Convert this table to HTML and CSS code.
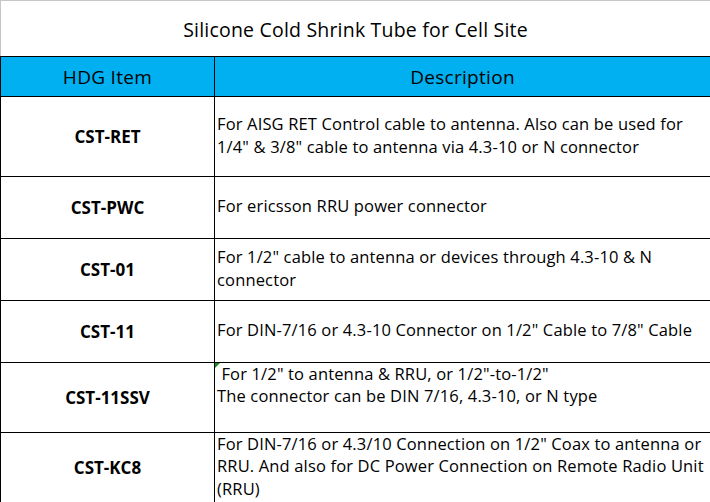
FILE: index.html
```html
<!DOCTYPE html>
<html>
<head>
<meta charset="utf-8">
<link rel="stylesheet" href="styles.css">
</head>
<body>
<div class="sheet">
  <div class="title">Silicone Cold Shrink Tube for Cell Site</div>
  <div class="grid">
    <div class="cell head">HDG Item</div>
    <div class="cell head">Description</div>

    <div class="cell item">CST-RET</div>
    <div class="cell desc">For AISG RET Control cable to antenna. Also can be used for<br>1/4" &amp; 3/8" cable to antenna via 4.3-10 or N connector</div>

    <div class="cell item">CST-PWC</div>
    <div class="cell desc">For ericsson RRU power connector</div>

    <div class="cell item">CST-01</div>
    <div class="cell desc">For 1/2" cable to antenna or devices through 4.3-10 &amp; N<br>connector</div>

    <div class="cell item">CST-11</div>
    <div class="cell desc">For DIN-7/16 or 4.3-10 Connector on 1/2" Cable to 7/8" Cable</div>

    <div class="cell item">CST-11SSV</div>
    <div class="cell desc note">&nbsp;For 1/2" to antenna &amp; RRU, or 1/2"-to-1/2"<br>The connector can be DIN 7/16, 4.3-10, or N type<br>&nbsp;</div>

    <div class="cell item">CST-KC8</div>
    <div class="cell desc">For DIN-7/16 or 4.3/10 Connection on 1/2" Coax to antenna or<br>RRU. And also for DC Power Connection on Remote Radio Unit<br>(RRU)</div>
  </div>
</div>
</body>
</html>
```

FILE: styles.css
```css
html, body {
  margin: 0;
  padding: 0;
  background: #ffffff;
  overflow: hidden;
}

.sheet {
  width: 710px;
  font-family: "Open Sans", "Noto Sans", sans-serif;
  color: #000000;
}

.title {
  box-sizing: border-box;
  height: 56px;
  border-top: 1px solid #c6c6c6;
  border-left: 1px solid #c6c6c6;
  display: flex;
  align-items: center;
  justify-content: center;
  font-size: 19.5px;
  letter-spacing: 0.2px;
  padding-top: 1px;
}

.grid {
  display: grid;
  grid-template-columns: 214px 496px;
  grid-template-rows: 40px 80px 62px 62px 62px 70px 70px;
}

.cell {
  box-sizing: border-box;
  border-top: 1px solid #000000;
  border-left: 1px solid #000000;
  display: flex;
  align-items: center;
  position: relative;
  white-space: nowrap;
}

.head {
  background: #00b0f0;
  justify-content: center;
  font-size: 19px;
  letter-spacing: 0.3px;
}

.item {
  justify-content: center;
  font-weight: bold;
  font-size: 17px;
}

.desc {
  font-size: 16.5px;
  letter-spacing: 0.15px;
  line-height: 22.5px;
  padding-left: 2px;
  padding-bottom: 2px;
}

.note::before {
  content: "";
  position: absolute;
  left: 0;
  top: 0;
  width: 0;
  height: 0;
  border-top: 5px solid #1a8a1a;
  border-right: 5px solid transparent;
}
```
